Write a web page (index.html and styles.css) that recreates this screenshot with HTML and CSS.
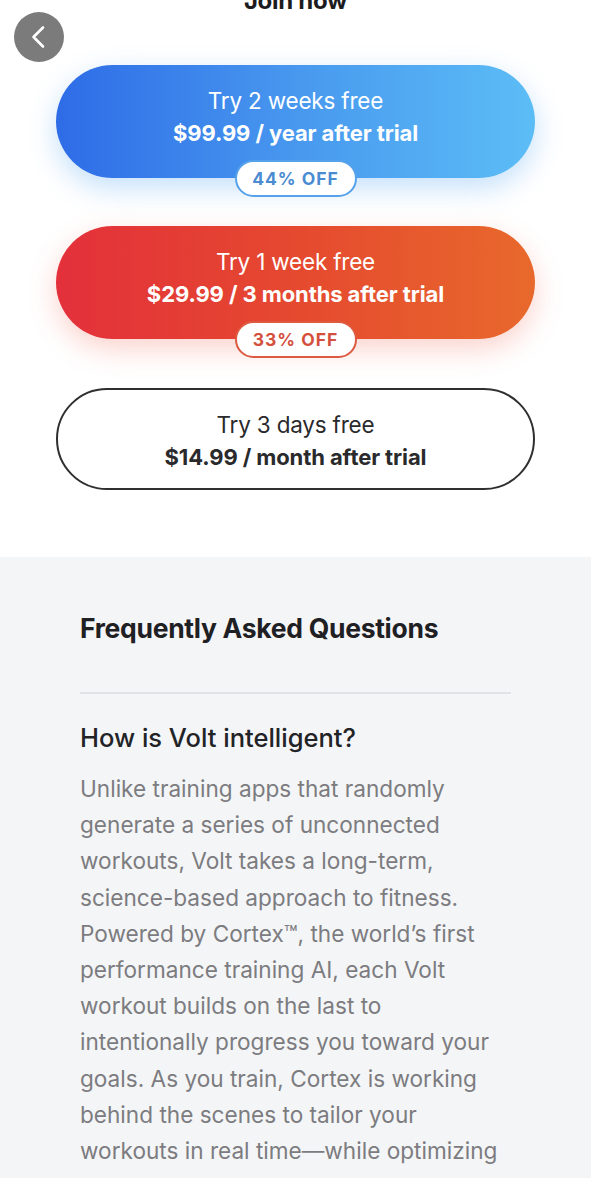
FILE: index.html
```html
<!DOCTYPE html>
<html lang="en">
<head>
<meta charset="utf-8">
<title>Join now</title>
<link rel="stylesheet" href="styles.css">
</head>
<body>
<section class="join">
  <button class="back" aria-label="Back">
    <svg width="50" height="50" viewBox="0 0 50 50"><circle cx="25" cy="25" r="25" fill="#7b7b7b"/><polyline points="29,15.5 19.5,25 29,34.5" fill="none" stroke="#fff" stroke-width="2.6" stroke-linecap="round" stroke-linejoin="round"/></svg>
  </button>
  <h1 class="title">Join now</h1>
  <div class="plans">
    <div class="plan plan-blue">
      <div class="plan-trial">Try 2 weeks free</div>
      <div class="plan-price">$99.99 / year after trial</div>
      <span class="badge badge-blue">44% OFF</span>
    </div>
    <div class="plan plan-orange">
      <div class="plan-trial">Try 1 week free</div>
      <div class="plan-price">$29.99 / 3 months after trial</div>
      <span class="badge badge-orange">33% OFF</span>
    </div>
    <div class="plan plan-outline">
      <div class="plan-trial">Try 3 days free</div>
      <div class="plan-price">$14.99 / month after trial</div>
    </div>
  </div>
</section>
<section class="faq">
  <h2 class="faq-title">Frequently Asked Questions</h2>
  <hr class="faq-divider">
  <h3 class="faq-q">How is Volt intelligent?</h3>
  <p class="faq-a">Unlike training apps that randomly generate a series of unconnected workouts, Volt takes a long-term, science-based approach to fitness. Powered by Cortex™, the world’s first performance training AI, each Volt workout builds on the last to intentionally progress you toward your goals. As you train, Cortex is working behind the scenes to tailor your workouts in real time—while optimizing your long-term progress.</p>
</section>
</body>
</html>
```

FILE: styles.css
```css
* { box-sizing: border-box; }
html, body { margin: 0; padding: 0; }
body {
  font-family: Inter, "Noto Sans", "Liberation Sans", sans-serif;
  background: #ffffff;
  color: #1f2023;
  overflow: hidden;
}
.join {
  position: relative;
  display: flow-root;
  height: 557px;
  background: #fff;
}
.back {
  position: absolute;
  left: 14px;
  top: 12px;
  width: 50px;
  height: 50px;
  padding: 0;
  border: 0;
  background: none;
  line-height: 0;
}
.title {
  margin: -14px 0 0;
  font-size: 24px;
  line-height: 30px;
  font-weight: 700;
  text-align: center;
  color: #1c1c1e;
  letter-spacing: -0.3px;
}
.plans {
  margin-top: 49px;
  padding: 0 56px;
  display: flex;
  flex-direction: column;
  gap: 48px;
}
.plan {
  position: relative;
  border-radius: 60px;
  text-align: center;
  padding: 20px 0 29px;
  height: 113px;
}
.plan-trial {
  font-size: 22.5px;
  line-height: 32px;
  font-weight: 400;
  letter-spacing: -0.2px;
}
.plan-price {
  font-size: 22px;
  line-height: 32px;
  font-weight: 700;
  letter-spacing: -0.1px;
}
.plan-blue {
  color: #fff;
  background: linear-gradient(90deg, #2e6ce7 0%, #4a9cef 55%, #5cbdf6 100%);
  box-shadow: 0 10px 28px rgba(70, 160, 240, 0.32);
}
.plan-orange {
  color: #fff;
  background: linear-gradient(90deg, #e3303b 0%, #e5492f 50%, #e8692c 100%);
  box-shadow: 0 10px 28px rgba(240, 110, 90, 0.3);
}
.plan-outline {
  height: 102px;
  padding: 19px 0 14px;
  border: 2.5px solid #2f2f31;
  color: #2a2a2c;
  margin-top: 1px;
}
.badge {
  position: absolute;
  left: 50%;
  bottom: -19px;
  transform: translateX(-50%);
  width: 122px;
  height: 37px;
  border-radius: 19px;
  background: #fff;
  font-size: 17.5px;
  line-height: 33px;
  font-weight: 700;
  letter-spacing: 1px;
  text-align: center;
}
.badge-blue {
  border: 2px solid #56a2ea;
  color: #4a8bd2;
}
.badge-orange {
  border: 2px solid #dd5a40;
  color: #d4503c;
}
.faq {
  background: #f4f5f7;
  padding: 56px 80px 0;
  height: 621px;
  overflow: hidden;
}
.faq-title {
  margin: 0;
  font-size: 26.5px;
  line-height: 30px;
  font-weight: 700;
  letter-spacing: -0.3px;
  color: #1f2023;
}
.faq-divider {
  margin: 49px 0 0;
  border: 0;
  height: 2px;
  background: #e2e3e6;
}
.faq-q {
  margin: 29px 0 0;
  font-size: 25.5px;
  line-height: 30px;
  font-weight: 500;
  letter-spacing: 0;
  color: #222326;
}
.faq-a {
  margin: 18px 0 0;
  font-size: 22.6px;
  line-height: 36.2px;
  font-weight: 400;
  color: #7c7c80;
  letter-spacing: 0;
}
```
